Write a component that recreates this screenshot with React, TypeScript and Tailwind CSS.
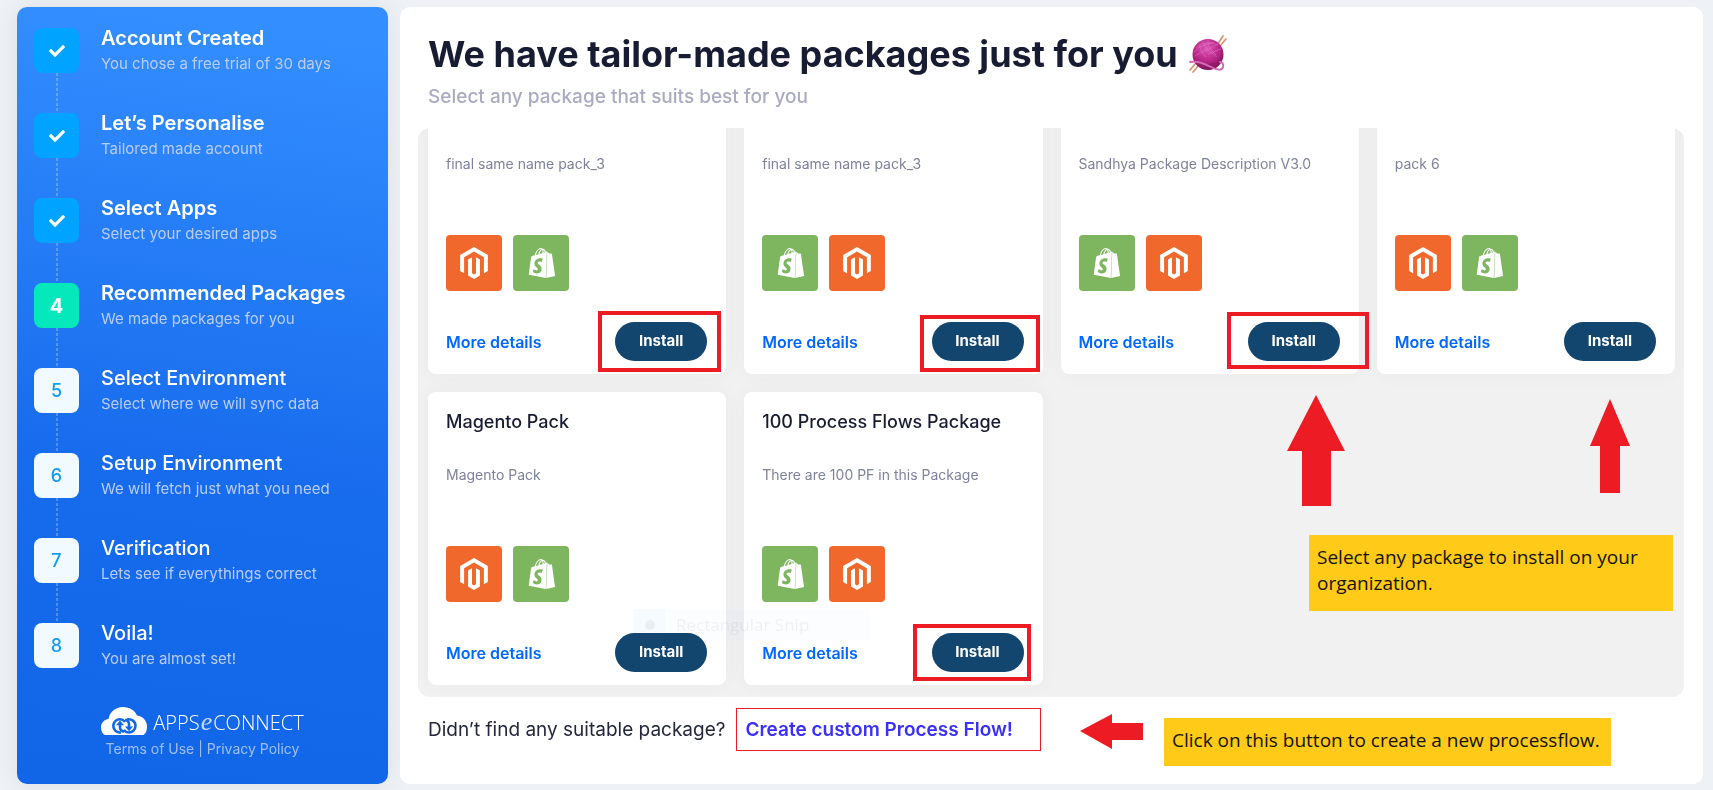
import type { ReactNode } from "react";
import { SiShopify } from "react-icons/si";
import { FaCheck } from "react-icons/fa";

type StepState = "done" | "current" | "todo";
type AppName = "magento" | "shopify";

const steps: { title: string; note: string; state: StepState }[] = [
  { title: "Account Created", note: "You chose a free trial of 30 days", state: "done" },
  { title: "Let’s Personalise", note: "Tailored made account", state: "done" },
  { title: "Select Apps", note: "Select your desired apps", state: "done" },
  { title: "Recommended Packages", note: "We made packages for you", state: "current" },
  { title: "Select Environment", note: "Select where we will sync data", state: "todo" },
  { title: "Setup Environment", note: "We will fetch just what you need", state: "todo" },
  { title: "Verification", note: "Lets see if everythings correct", state: "todo" },
  { title: "Voila!", note: "You are almost set!", state: "todo" },
];

const packages: { title?: string; description: string; apps: AppName[]; mark?: string }[] = [
  { description: "final same name pack_3", apps: ["magento", "shopify"], mark: "-left-[17px] -right-[14px] -top-[11px] -bottom-[11px]" },
  { description: "final same name pack_3", apps: ["shopify", "magento"], mark: "-left-3 -right-4 -top-[7px] -bottom-[11px]" },
  { description: "Sandhya Package Description V3.0", apps: ["shopify", "magento"], mark: "-left-[21px] -right-[29px] -top-[10px] -bottom-2" },
  { description: "pack 6", apps: ["magento", "shopify"] },
  { title: "Magento Pack", description: "Magento Pack", apps: ["magento", "shopify"] },
  { title: "100 Process Flows Package", description: "There are 100 PF in this Package", apps: ["shopify", "magento"], mark: "-left-[19px] -right-[7px] -top-[9px] -bottom-[9px]" },
];

const stepStyles: Record<StepState, string> = {
  done: "bg-[#00a3ff] text-white",
  current: "bg-[#04e8bb] text-white text-xl font-bold",
  todo: "bg-[#f1faff] text-[#109cf5] text-lg font-medium",
};

function Step({ index, last }: { index: number; last: boolean }) {
  const step = steps[index];
  return (
    <li className="flex h-[85px] gap-[22px]">
      <div className="flex flex-col items-center pt-[3px]">
        <span className={`flex size-[45px] shrink-0 items-center justify-center rounded-lg ${stepStyles[step.state]}`}>
          {step.state === "done" ? <FaCheck className="size-4" /> : index + 1}
        </span>
        {!last && <span className="-mb-[3px] w-0.5 flex-1 bg-[repeating-linear-gradient(to_bottom,#ffffff40_0_3px,transparent_3px_5px)]" />}
      </div>
      <div>
        <h3 className={`text-xl leading-[26px] text-white ${step.state === "todo" ? "font-medium" : "font-semibold"}`}>{step.title}</h3>
        <p className="text-[15px] leading-[25px] text-[#b9cdfb]">{step.note}</p>
      </div>
    </li>
  );
}

function CloudLogo() {
  return (
    <div className="flex items-end gap-1.5 text-white">
      <svg viewBox="0 0 46 28" className="h-7 w-[46px]" aria-hidden="true">
        <path fill="#fff" d="M4 28C1.500 27 0 24 0 20.500c0-4.500 3-8 7.500-8.500C8.500 5 14.500 0 22 0c6.500 0 12 3.500 14 8.500C42 9 46 14 46 19.500c0 4-1 7-3.500 8.500z" />
        <g fill="none" stroke="#1266e8" strokeWidth="2.600">
          <path d="M20 25.400c-4 .6-7.700-2-7.700-6.400 0-4 3.200-6.700 6.700-6.700 2 0 3.500.7 5 2.500" />
          <path d="M26 12.500c4.500-1 8.500 2 8.500 6.300 0 4-3.200 6.700-6.700 6.700-2 0-3.700-.8-5-2.500" />
          <path d="M19 16.500v4.500q.2 2.500 4 4M28 21v-4.500q-.2-2.500-4-3.700" />
        </g>
        <path fill="#1266e8" d="M19 13.600l4 4.700h-8zM28 24.300l-4-4.700h8z" />
      </svg>
      <span className="flex items-baseline font-[Open_Sans,sans-serif] text-xl leading-6 font-light">
        APPS
        <i className="px-px font-[Liberation_Serif,serif] text-[26px] leading-6 font-normal opacity-75">e</i>
        CONNECT
      </span>
    </div>
  );
}

function Yarn() {
  return (
    <svg viewBox="0 0 40 40" className="size-10" role="img" aria-label="Yarn">
      <defs>
        <radialGradient id="yarn" cx="0.45" cy="0.3" r="0.7">
          <stop offset="0" stopColor="#dc55b5" />
          <stop offset="0.6" stopColor="#b92688" />
          <stop offset="1" stopColor="#7c1557" />
        </radialGradient>
      </defs>
      <g stroke="#d99573" strokeWidth="1.800" strokeLinecap="round">
        <path d="M29 11L35 2M32 12l6-7M2 36l6-7M5 38l6-7" />
      </g>
      <circle cx="20" cy="20.500" r="15.500" fill="url(#yarn)" />
      <g fill="none" stroke="#e887cb" strokeWidth="0.700" opacity="0.600">
        <path d="M8 14q10-9 22-3M6 18q9-9 20-9M20 6q-1 7 8 15M14 7q3 8 15 16M12 10q-1 7 6 13M18 17l12-7M20 20l13-5M7 22l12-7" />
      </g>
      <path fill="none" stroke="#8c1963" strokeWidth="0.900" d="M7 28q13 5 26 0M9 31q11 5 22 0M14 34q7 2 12 0" />
      <path fill="none" stroke="#d368b4" strokeWidth="1.900" strokeLinecap="round" d="M2 28c9-1 15 2 21 5 6 3 11 4 12 0 1-3-1-5-3-5" />
    </svg>
  );
}

function AppTile({ name }: { name: AppName }) {
  if (name === "magento") {
    return (
      <span className="flex size-14 items-center justify-center rounded-sm bg-[#f1682c] text-white">
        <svg viewBox="1.600 0 20.800 24" className="h-8 w-7" fill="currentColor" role="img" aria-label="Magento">
          <path d="M12 24l-4.455-2.572v-12l2.970-1.715v12.001l1.485.902 1.485-.902V7.713l2.971 1.715v12L12 24zM22.391 6v12l-2.969 1.714V7.713L12 3.430 4.574 7.713v12.001L1.609 18V6L12 0l10.391 6z" />
        </svg>
      </span>
    );
  }
  return (
    <span className="flex size-14 items-center justify-center rounded-sm bg-[#7db65e] pl-px text-white">
      <SiShopify className="size-[30px]" aria-label="Shopify" />
    </span>
  );
}

function PackageCard({ title, description, apps, mark }: (typeof packages)[number]) {
  return (
    <article className="flex h-[293px] flex-col rounded-lg bg-white pb-[13px] pl-[18px] pr-[19px] shadow-[0_0_20px_#4c577d0a]">
      <div className="h-[73px] pt-[17px]">
        {title && <h2 className="text-lg font-medium leading-[26px] text-[#181c32]">{title}</h2>}
      </div>
      <p className="flex-1 text-sm leading-5 text-[#7e829c]">{description}</p>
      <div className="flex gap-[11px]">
        {apps.map((app) => (
          <AppTile key={app} name={app} />
        ))}
      </div>
      <div className="mt-[31px] flex items-center justify-between">
        <a href="#details" className="text-base font-semibold text-[#0068ff]">
          More details
        </a>
        <div className="relative">
          <button type="button" className="h-[39px] w-[92px] rounded-full bg-[#12466f] text-[15px] font-bold text-white">
            Install
          </button>
          {mark && <span className={`pointer-events-none absolute border-4 border-[#ed1c24] ${mark}`} />}
        </div>
      </div>
    </article>
  );
}

function Note({ className, children }: { className: string; children: ReactNode }) {
  return (
    <p className={`absolute bg-[#ffca18] px-2 font-[Open_Sans,sans-serif] text-[19px] leading-[26px] text-[#15120a] ${className}`}>
      {children}
    </p>
  );
}

export default function App() {
  return (
    <div className="flex h-screen gap-3 bg-[#eef2f6] pb-1.5 pl-[17px] pr-2.5 pt-[7px] font-[Inter,sans-serif]">
      <aside className="flex w-[371px] shrink-0 flex-col rounded-[10px] bg-[linear-gradient(188deg,#338eff_5%,#176bed_60%,#1165e7_100%)] pl-[17px] pt-[18px] shadow-[0_0_24px_#3f42541a]">
        <ol>
          {steps.map((step, i) => (
            <Step key={step.title} index={i} last={i === steps.length - 1} />
          ))}
        </ol>
        <div className="flex flex-col items-center pr-[17px] pt-0.5">
          <CloudLogo />
          <p className="mt-0.5 text-sm leading-6 text-[#9ec0fa]">
            <a href="#terms">Terms of Use</a> | <a href="#privacy">Privacy Policy</a>
          </p>
        </div>
      </aside>

      <main className="relative flex min-w-0 flex-1 flex-col rounded-[10px] bg-white pl-[18px] pr-[19px]">
        <header className="h-[121px] pl-2.5 pt-[27px]">
          <h1 className="flex items-center gap-2.5 text-4xl leading-10 font-bold text-[#181c32]">
            We have tailor-made packages just for you
            <Yarn />
          </h1>
          <p className="mt-[11px] text-[19px] leading-6 font-medium text-[#aaaac2]">Select any package that suits best for you</p>
        </header>

        <section className="flex min-h-0 flex-1 flex-col justify-end overflow-hidden rounded-xl bg-[#f1f1f1] pb-3 pl-2.5 pr-[9px]">
          <div className="grid grid-cols-4 gap-[18px]">
            {packages.map((item, i) => (
              <PackageCard key={i} {...item} />
            ))}
          </div>
        </section>

        <footer className="flex h-[87px] items-start gap-[11px] pl-2.5 pt-[11px] text-[19px]">
          <p className="leading-[43px] text-[#24273c]">Didn’t find any suitable package?</p>
          <a href="#custom" className="h-[43px] w-[305px] border border-[#ed1c24] px-2 font-semibold leading-[41px] text-[#3a30f8]">
            Create custom Process Flow!
          </a>
        </footer>

        <div className="pointer-events-none absolute bottom-36 left-[234px] flex h-[31px] w-[236px] items-center bg-[#eff5ff]/20 font-[Open_Sans,sans-serif] text-[17px] text-black/5 mix-blend-multiply">
          <span className="flex h-full w-[31px] items-center justify-center bg-[#e6f4ff]/30">
            <span className="size-2.5 rounded-full bg-black/5" />
          </span>
          <span className="pl-[11px]">Rectangular Snip</span>
        </div>

        <svg viewBox="0 0 58 111" className="absolute right-[358px] top-[388px] h-[111px] w-[58px]" fill="#ed1c24" aria-hidden="true">
          <path d="M29 0l29 56H44v55H15V56H0z" />
        </svg>
        <svg viewBox="0 0 40 94" className="absolute right-[73px] top-[392px] h-[94px] w-10" fill="#ed1c24" aria-hidden="true">
          <path d="M20 0l20 47H30v47H10V47H0z" />
        </svg>
        <Note className="right-[30px] top-[528px] h-[76px] w-[364px] pt-[9px]">Select any package to install on your organization.</Note>
        <svg viewBox="0 0 63 35" className="absolute bottom-[35px] right-[560px] h-[35px] w-[63px]" fill="#ed1c24" aria-hidden="true">
          <path d="M0 17L32 0v9h31v17H32v9z" />
        </svg>
        <Note className="bottom-[18px] right-[92px] h-12 w-[447px] pt-[9px]">Click on this button to create a new processflow.</Note>
      </main>
    </div>
  );
}
